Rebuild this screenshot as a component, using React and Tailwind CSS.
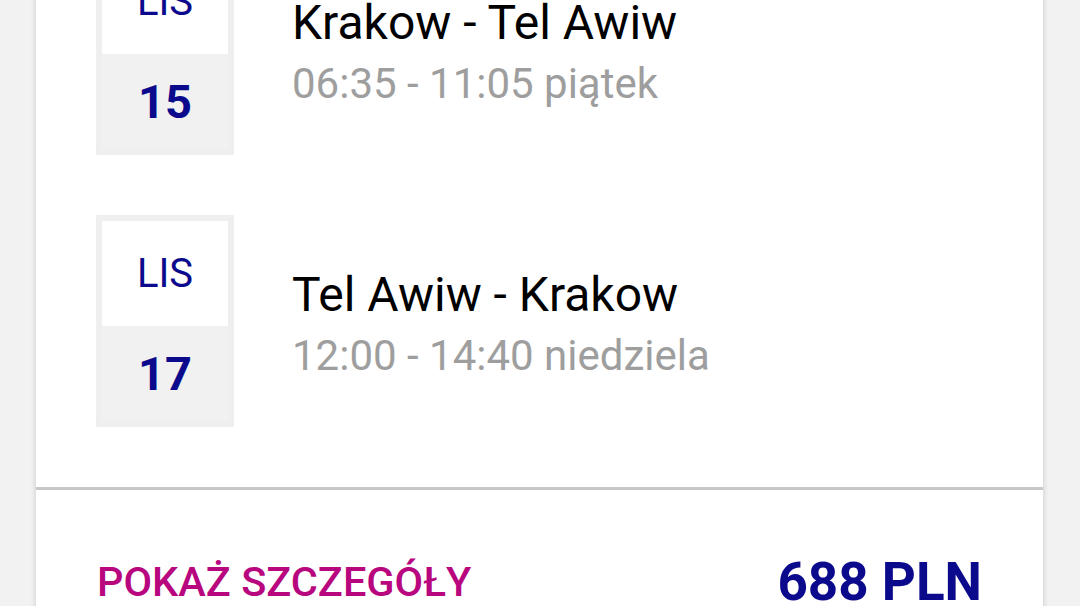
import React from 'react';

const flights = [
  { month: 'LIS', day: '15', route: 'Krakow - Tel Awiw', time: '06:35 - 11:05 piątek' },
  { month: 'LIS', day: '17', route: 'Tel Awiw - Krakow', time: '12:00 - 14:40 niedziela' },
];

const DateBox = ({ month, day }) => (
  <div className="w-[138px] h-[212px] border-[6px] border-[#efefef] flex flex-col shrink-0">
    <div className="h-[105px] bg-white flex items-center justify-center text-[40px] leading-none text-[#0b0a8c]">
      {month}
    </div>
    <div className="flex-1 bg-[#f1f1f1] flex items-center justify-center text-[47px] leading-none font-bold text-[#0b0a8c]">
      {day}
    </div>
  </div>
);

export default function App() {
  return (
    <div className="h-[606px] w-[1080px] overflow-hidden bg-[#f2f2f2]" style={{ fontFamily: 'Roboto, "Noto Sans", sans-serif' }}>
      <div className="ml-[36px] w-[1007px] bg-white shadow-[0_0_6px_rgba(0,0,0,0.18)]">
        <div className="-mt-[57px] px-[60px] flex flex-col gap-[60px] pb-[60px]">
          {flights.map((f) => (
            <div key={f.day} className="flex items-center gap-[58px]">
              <DateBox month={f.month} day={f.day} />
              <div className="flex flex-col pt-[8px]">
                <div className="text-[48px] leading-[56px] text-black">{f.route}</div>
                <div className="mt-[5px] text-[42px] leading-[56px] text-[#9e9e9e]">{f.time}</div>
              </div>
            </div>
          ))}
        </div>
        <div className="h-[3px] bg-[#c8c8c8]" />
        <div className="flex items-start justify-between px-[61px] pt-[64px] pb-[40px]">
          <div className="text-[41.5px] leading-[56px] font-medium text-[#b8067f]">POKAŻ SZCZEGÓŁY</div>
          <div className="text-[53px] leading-[56px] font-bold text-[#0b0a8c]">688 PLN</div>
        </div>
      </div>
    </div>
  );
}
